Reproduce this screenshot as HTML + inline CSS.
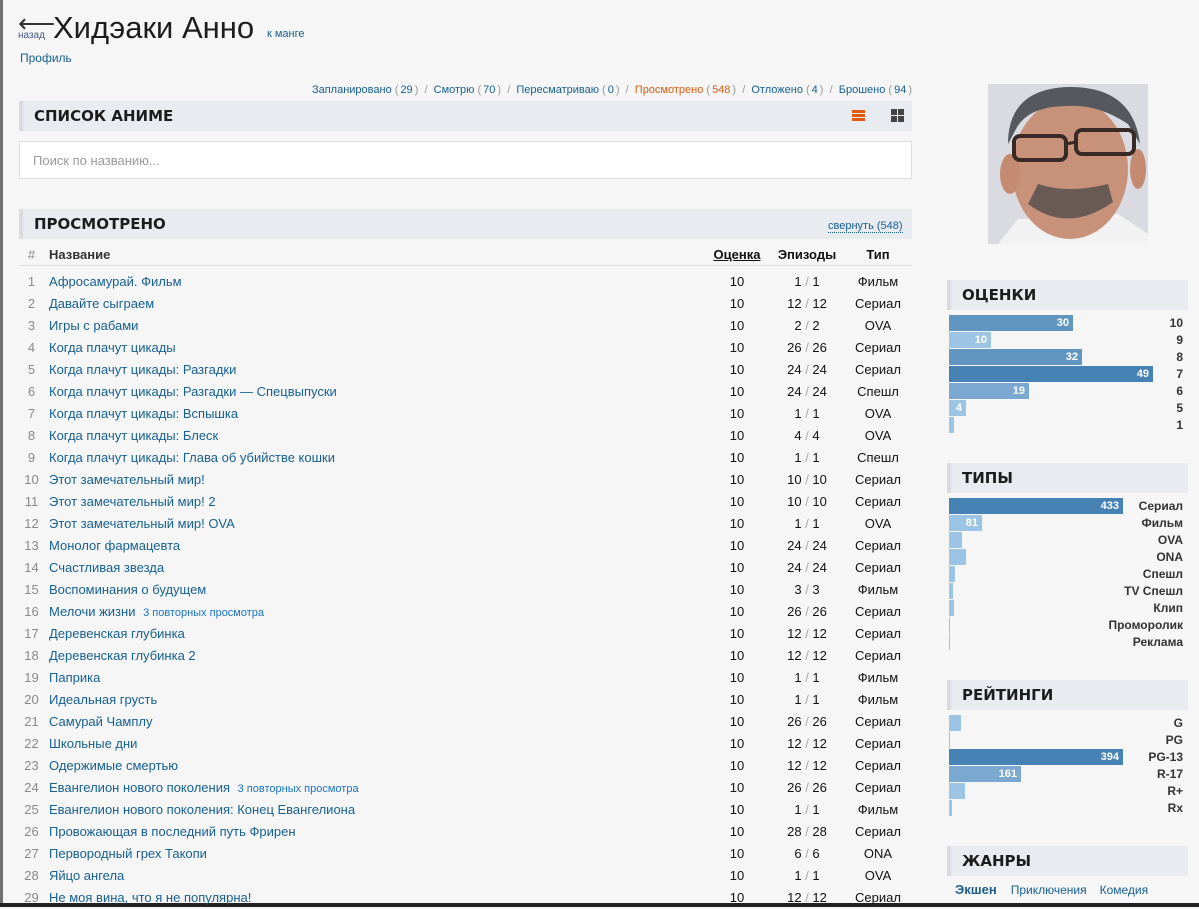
<!DOCTYPE html>
<html><head><meta charset="utf-8"><style>
*{margin:0;padding:0;box-sizing:border-box}
body{width:1199px;height:907px;overflow:hidden;background:#f6f6f6;font-family:"Liberation Sans",Arial,sans-serif;font-size:13px;color:#343434;position:relative}
a{color:#176093;text-decoration:none}
.abs{position:absolute}
.hdr{position:absolute;background:#e8ebef;border-left:4px solid #d8dce1;font-family:"DejaVu Sans","Liberation Sans",sans-serif;font-weight:bold;font-size:15px;color:#1d1d1d;padding-left:11px}
.row{position:absolute;left:19px;width:893px;height:22px;line-height:22px;font-size:13px}
.row .n{position:absolute;left:0;width:25px;text-align:center;color:#8a8a8a}
.row .t{position:absolute;left:30px;color:#176093}
.row .t small{font-size:11px;color:#1a73c8;margin-left:4px}
.row .s{position:absolute;left:698px;width:40px;text-align:center;color:#111}
.row .e{position:absolute;left:758px;width:60px;text-align:center;color:#111}
.row .e i{font-style:normal;color:#aaa}
.row .y{position:absolute;left:828px;width:62px;text-align:center;color:#111}
.bar{position:absolute;left:949px;height:16px;color:#fff;font-weight:bold;font-size:11px;text-align:right;padding-right:4px;line-height:16px}
.lbl{position:absolute;right:16px;font-weight:bold;font-size:12px;color:#333;line-height:16px;text-align:right}
.d{background:#4682b4}.m{background:#6096bf}.l{background:#7aa8d0}.p{background:#9cc4e4}
.st{position:absolute;right:287px;top:84px;font-size:11px;color:#999;white-space:nowrap}
.st b{font-weight:normal;margin:0 2px}
</style></head><body>
<div class="abs" style="left:0;top:0;width:3px;height:907px;background:#707070"></div>
<div class="abs" style="left:0;top:903px;width:1199px;height:4px;background:#222"></div>

<div class="abs" style="left:18px;top:10px;font-size:26px;color:#333;line-height:26px">⟵</div>
<div class="abs" style="left:18px;top:30px;font-size:10px;color:#4a5a8a">назад</div>
<div class="abs" style="left:53px;top:8px;font-family:'Liberation Sans',sans-serif;font-size:31px;color:#1d1d1d;line-height:40px">Хидэаки Анно</div>
<a class="abs" style="left:267px;top:28px;font-size:11px">к манге</a>
<a class="abs" style="left:20px;top:51px;font-size:12px">Профиль</a>

<div class="st"><a>Запланировано</a> (<b style="color:#176093">29</b>) &nbsp;/&nbsp; <a>Смотрю</a> (<b style="color:#176093">70</b>) &nbsp;/&nbsp; <a>Пересматриваю</a> (<b style="color:#176093">0</b>) &nbsp;/&nbsp; <span style="color:#e05a0f">Просмотрено</span> (<b style="color:#e05a0f">548</b>) &nbsp;/&nbsp; <a>Отложено</a> (<b style="color:#176093">4</b>) &nbsp;/&nbsp; <a>Брошено</a> (<b style="color:#176093">94</b>)</div>

<div class="hdr" style="left:19px;top:101px;width:893px;height:30px;line-height:30px">СПИСОК АНИМЕ</div>
<div class="abs" style="left:852px;top:110px;width:13px;height:3px;background:#e05a0f;box-shadow:0 4px 0 #e05a0f,0 8px 0 #e05a0f"></div>
<div class="abs" style="left:891px;top:109px;width:6px;height:6px;background:#444;box-shadow:7px 0 0 #444,0 7px 0 #444,7px 7px 0 #444"></div>
<div class="abs" style="left:19px;top:141px;width:893px;height:38px;background:#fff;border:1px solid #ddd;padding-left:13px;line-height:38px;color:#999;font-size:13px">Поиск по названию...</div>

<div class="hdr" style="left:19px;top:209px;width:893px;height:30px;line-height:30px">ПРОСМОТРЕНО</div>
<div class="abs" style="left:828px;top:220px;font-size:11px;color:#176093;border-bottom:1px dotted #176093">свернуть (548)</div>

<div class="row" style="top:244px;font-weight:bold;color:#333;border-bottom:1px solid #ddd;height:22px"><span class="n" style="font-weight:normal">#</span><span class="t" style="color:#333">Название</span><span class="s" style="left:692px;width:52px;text-decoration:underline">Оценка</span><span class="e">Эпизоды</span><span class="y">Тип</span></div>

<div class="row" style="top:271px"><span class="n">1</span><span class="t">Афросамурай. Фильм</span><span class="s">10</span><span class="e">1 <i>/</i> 1</span><span class="y">Фильм</span></div>
<div class="row" style="top:293px"><span class="n">2</span><span class="t">Давайте сыграем</span><span class="s">10</span><span class="e">12 <i>/</i> 12</span><span class="y">Сериал</span></div>
<div class="row" style="top:315px"><span class="n">3</span><span class="t">Игры с рабами</span><span class="s">10</span><span class="e">2 <i>/</i> 2</span><span class="y">OVA</span></div>
<div class="row" style="top:337px"><span class="n">4</span><span class="t">Когда плачут цикады</span><span class="s">10</span><span class="e">26 <i>/</i> 26</span><span class="y">Сериал</span></div>
<div class="row" style="top:359px"><span class="n">5</span><span class="t">Когда плачут цикады: Разгадки</span><span class="s">10</span><span class="e">24 <i>/</i> 24</span><span class="y">Сериал</span></div>
<div class="row" style="top:381px"><span class="n">6</span><span class="t">Когда плачут цикады: Разгадки — Спецвыпуски</span><span class="s">10</span><span class="e">24 <i>/</i> 24</span><span class="y">Спешл</span></div>
<div class="row" style="top:403px"><span class="n">7</span><span class="t">Когда плачут цикады: Вспышка</span><span class="s">10</span><span class="e">1 <i>/</i> 1</span><span class="y">OVA</span></div>
<div class="row" style="top:425px"><span class="n">8</span><span class="t">Когда плачут цикады: Блеск</span><span class="s">10</span><span class="e">4 <i>/</i> 4</span><span class="y">OVA</span></div>
<div class="row" style="top:447px"><span class="n">9</span><span class="t">Когда плачут цикады: Глава об убийстве кошки</span><span class="s">10</span><span class="e">1 <i>/</i> 1</span><span class="y">Спешл</span></div>
<div class="row" style="top:469px"><span class="n">10</span><span class="t">Этот замечательный мир!</span><span class="s">10</span><span class="e">10 <i>/</i> 10</span><span class="y">Сериал</span></div>
<div class="row" style="top:491px"><span class="n">11</span><span class="t">Этот замечательный мир! 2</span><span class="s">10</span><span class="e">10 <i>/</i> 10</span><span class="y">Сериал</span></div>
<div class="row" style="top:513px"><span class="n">12</span><span class="t">Этот замечательный мир! OVA</span><span class="s">10</span><span class="e">1 <i>/</i> 1</span><span class="y">OVA</span></div>
<div class="row" style="top:535px"><span class="n">13</span><span class="t">Монолог фармацевта</span><span class="s">10</span><span class="e">24 <i>/</i> 24</span><span class="y">Сериал</span></div>
<div class="row" style="top:557px"><span class="n">14</span><span class="t">Счастливая звезда</span><span class="s">10</span><span class="e">24 <i>/</i> 24</span><span class="y">Сериал</span></div>
<div class="row" style="top:579px"><span class="n">15</span><span class="t">Воспоминания о будущем</span><span class="s">10</span><span class="e">3 <i>/</i> 3</span><span class="y">Фильм</span></div>
<div class="row" style="top:601px"><span class="n">16</span><span class="t">Мелочи жизни <small>3 повторных просмотра</small></span><span class="s">10</span><span class="e">26 <i>/</i> 26</span><span class="y">Сериал</span></div>
<div class="row" style="top:623px"><span class="n">17</span><span class="t">Деревенская глубинка</span><span class="s">10</span><span class="e">12 <i>/</i> 12</span><span class="y">Сериал</span></div>
<div class="row" style="top:645px"><span class="n">18</span><span class="t">Деревенская глубинка 2</span><span class="s">10</span><span class="e">12 <i>/</i> 12</span><span class="y">Сериал</span></div>
<div class="row" style="top:667px"><span class="n">19</span><span class="t">Паприка</span><span class="s">10</span><span class="e">1 <i>/</i> 1</span><span class="y">Фильм</span></div>
<div class="row" style="top:689px"><span class="n">20</span><span class="t">Идеальная грусть</span><span class="s">10</span><span class="e">1 <i>/</i> 1</span><span class="y">Фильм</span></div>
<div class="row" style="top:711px"><span class="n">21</span><span class="t">Самурай Чамплу</span><span class="s">10</span><span class="e">26 <i>/</i> 26</span><span class="y">Сериал</span></div>
<div class="row" style="top:733px"><span class="n">22</span><span class="t">Школьные дни</span><span class="s">10</span><span class="e">12 <i>/</i> 12</span><span class="y">Сериал</span></div>
<div class="row" style="top:755px"><span class="n">23</span><span class="t">Одержимые смертью</span><span class="s">10</span><span class="e">12 <i>/</i> 12</span><span class="y">Сериал</span></div>
<div class="row" style="top:777px"><span class="n">24</span><span class="t">Евангелион нового поколения <small>3 повторных просмотра</small></span><span class="s">10</span><span class="e">26 <i>/</i> 26</span><span class="y">Сериал</span></div>
<div class="row" style="top:799px"><span class="n">25</span><span class="t">Евангелион нового поколения: Конец Евангелиона</span><span class="s">10</span><span class="e">1 <i>/</i> 1</span><span class="y">Фильм</span></div>
<div class="row" style="top:821px"><span class="n">26</span><span class="t">Провожающая в последний путь Фрирен</span><span class="s">10</span><span class="e">28 <i>/</i> 28</span><span class="y">Сериал</span></div>
<div class="row" style="top:843px"><span class="n">27</span><span class="t">Первородный грех Такопи</span><span class="s">10</span><span class="e">6 <i>/</i> 6</span><span class="y">ONA</span></div>
<div class="row" style="top:865px"><span class="n">28</span><span class="t">Яйцо ангела</span><span class="s">10</span><span class="e">1 <i>/</i> 1</span><span class="y">OVA</span></div>
<div class="row" style="top:887px"><span class="n">29</span><span class="t">Не моя вина, что я не популярна!</span><span class="s">10</span><span class="e">12 <i>/</i> 12</span><span class="y">Сериал</span></div>

<svg class="abs" style="left:988px;top:84px" width="160" height="160" viewBox="0 0 160 160">
<rect width="160" height="160" fill="#d9dbe0"/>
<path d="M10 160 L30 135 L130 130 L160 150 L160 160Z" fill="#f2f2f2"/>
<ellipse cx="82" cy="85" rx="58" ry="70" fill="#c8927a"/>
<ellipse cx="22" cy="90" rx="10" ry="20" fill="#c58a72"/>
<ellipse cx="150" cy="85" rx="8" ry="20" fill="#c58a72"/>
<path d="M20 60 Q20 5 80 3 Q145 2 152 60 L140 40 Q110 20 80 22 Q40 22 28 45Z" fill="#55585c"/>
<path d="M40 120 Q80 150 125 118 L120 100 Q80 110 50 100Z" fill="#6a5a55"/>
<rect x="26" y="52" width="52" height="24" rx="6" fill="none" stroke="#3a2a25" stroke-width="4"/>
<rect x="88" y="46" width="58" height="24" rx="6" fill="none" stroke="#3a2a25" stroke-width="4"/>
<path d="M78 60 L88 58" stroke="#3a2a25" stroke-width="3"/>
</svg>

<div class="hdr" style="left:947px;top:280px;width:241px;height:30px;line-height:30px">ОЦЕНКИ</div>
<div class="bar m" style="top:315px;width:124px">30</div><div class="lbl" style="top:315px">10</div>
<div class="bar p" style="top:332px;width:42px">10</div><div class="lbl" style="top:332px">9</div>
<div class="bar m" style="top:349px;width:133px">32</div><div class="lbl" style="top:349px">8</div>
<div class="bar d" style="top:366px;width:204px">49</div><div class="lbl" style="top:366px">7</div>
<div class="bar l" style="top:383px;width:80px">19</div><div class="lbl" style="top:383px">6</div>
<div class="bar p" style="top:400px;width:17px">4</div><div class="lbl" style="top:400px">5</div>
<div class="bar p" style="top:417px;width:5px;padding:0"></div><div class="lbl" style="top:417px">1</div>

<div class="hdr" style="left:947px;top:463px;width:241px;height:30px;line-height:30px">ТИПЫ</div>
<div class="bar d" style="top:498px;width:174px">433</div><div class="lbl" style="top:498px">Сериал</div>
<div class="bar p" style="top:515px;width:33px">81</div><div class="lbl" style="top:515px">Фильм</div>
<div class="bar p" style="top:532px;width:13px;padding:0"></div><div class="lbl" style="top:532px">OVA</div>
<div class="bar p" style="top:549px;width:17px;padding:0"></div><div class="lbl" style="top:549px">ONA</div>
<div class="bar p" style="top:566px;width:6px;padding:0"></div><div class="lbl" style="top:566px">Спешл</div>
<div class="bar p" style="top:583px;width:4px;padding:0"></div><div class="lbl" style="top:583px">TV Спешл</div>
<div class="bar p" style="top:600px;width:5px;padding:0"></div><div class="lbl" style="top:600px">Клип</div>
<div class="bar p" style="top:617px;width:1px;padding:0"></div><div class="lbl" style="top:617px">Проморолик</div>
<div class="bar p" style="top:634px;width:1px;padding:0"></div><div class="lbl" style="top:634px">Реклама</div>

<div class="hdr" style="left:947px;top:680px;width:241px;height:30px;line-height:30px">РЕЙТИНГИ</div>
<div class="bar p" style="top:715px;width:12px;padding:0"></div><div class="lbl" style="top:715px">G</div>
<div class="bar p" style="top:732px;width:1px;padding:0"></div><div class="lbl" style="top:732px">PG</div>
<div class="bar d" style="top:749px;width:174px">394</div><div class="lbl" style="top:749px">PG-13</div>
<div class="bar l" style="top:766px;width:72px">161</div><div class="lbl" style="top:766px">R-17</div>
<div class="bar p" style="top:783px;width:16px;padding:0"></div><div class="lbl" style="top:783px">R+</div>
<div class="bar p" style="top:800px;width:3px;padding:0"></div><div class="lbl" style="top:800px">Rx</div>

<div class="hdr" style="left:947px;top:846px;width:241px;height:30px;line-height:30px">ЖАНРЫ</div>
<div class="abs" style="left:955px;top:882px;font-size:12px;white-space:nowrap"><b style="color:#1d5f8a;font-size:13px">Экшен</b><a style="margin-left:14px">Приключения</a><a style="margin-left:13px">Комедия</a></div>
</body></html>
